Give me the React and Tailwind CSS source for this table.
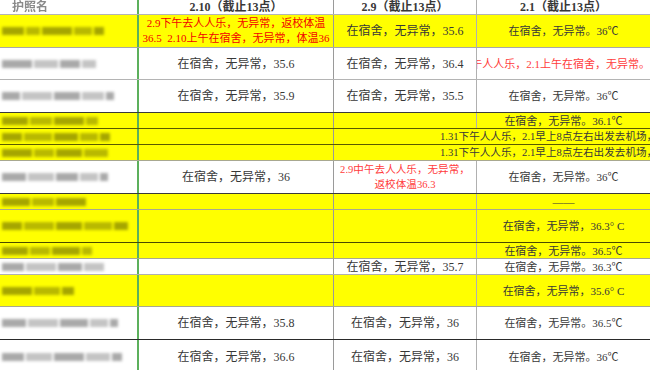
import React from 'react';

const FONT = "font-['Liberation_Serif','Noto_Sans_CJK_SC',serif]";

const ROWS = [
  { h: 'h-[33px]', yellow: true, line: 'border-[#a8a8a8]', name: [22, 14, 30, 18, 10], c2: 'red2', c3: '在宿舍，无异常，35.6', c4: '在宿舍，无异常。36℃' },
  { h: 'h-[32px]', yellow: false, line: 'border-[#b4b4b4]', name: [30, 24, 20, 14], c2: '在宿舍，无异常，35.6', c3: '在宿舍，无异常，36.4', c4: 'redClip' },
  { h: 'h-[33px]', yellow: false, line: 'border-[#3a3a3a]', name: [18, 30, 26, 22, 8], c2: '在宿舍，无异常，35.9', c3: '在宿舍，无异常，35.5', c4: '在宿舍，无异常。36℃' },
  { h: 'h-[16px]', yellow: true, line: 'border-[#5a5a00]', name: [26, 22, 30, 12], c2: '', c3: '', c4: '在宿舍，无异常。36.1℃' },
  { h: 'h-[16px]', yellow: true, line: 'border-[#5a5a00]', name: [20, 28, 24, 18, 10], c2: '', wide: '1.31下午人人乐，2.1早上8点左右出发去机场，' },
  { h: 'h-[16px]', yellow: true, line: 'border-[#a8a890]', name: [30, 20, 26, 24], c2: '', wide: '1.31下午人人乐，2.1早上8点左右出发去机场，' },
  { h: 'h-[33px]', yellow: false, line: 'border-[#3a3a3a]', name: [24, 26, 22, 18, 8], c2: '在宿舍，无异常，36', c3: 'red3', c4: '在宿舍，无异常。36℃' },
  { h: 'h-[16px]', yellow: true, line: 'border-[#a8a890]', name: [28, 22, 30], c2: '', c3: '', c4: '——' },
  { h: 'h-[33px]', yellow: true, line: 'border-[#4a4a00]', name: [20, 30, 26, 28, 14], c2: '', c3: '', c4: '在宿舍，无异常，36.3° C' },
  { h: 'h-[16px]', yellow: true, line: 'border-[#a8a890]', name: [26, 20, 28, 10], c2: '', c3: '', c4: '在宿舍，无异常。36.5℃' },
  { h: 'h-[16px]', yellow: false, line: 'border-[#b0b0b0]', name: [22, 30, 24, 20], c2: '', c3: '在宿舍，无异常，35.7', c4: '在宿舍，无异常。36.3℃' },
  { h: 'h-[32px]', yellow: true, line: 'border-[#a8a890]', name: [30, 26, 12], c2: '', c3: '', c4: '在宿舍，无异常，35.6° C' },
  { h: 'h-[33px]', yellow: false, line: 'border-[#2a2a2a]', name: [24, 30, 28, 18, 8], c2: '在宿舍，无异常，35.8', c3: '在宿舍，无异常，36', c4: '在宿舍，无异常。36.5℃' },
  { h: 'h-[34px]', yellow: false, line: 'border-[#b0b0b0]', name: [22, 26, 30, 24, 10], c2: '在宿舍，无异常，36.6', c3: '在宿舍，无异常，36', c4: '在宿舍，无异常。36℃' },
];

// redacted names: blurred blocks
const NameBlur = ({ parts, yellow }) => (
  <div className="flex items-center gap-[2px] pl-[2px] blur-[1.5px]">
    {parts.map((w, i) => (
      <span
        key={i}
        className={`h-[8px] ${yellow ? (i % 2 ? 'bg-[#b9b900]' : 'bg-[#a6a600]') : (i % 2 ? 'bg-[#c4c4c4]' : 'bg-[#a9a9a9]')}`}
        style={{ width: w }}
      />
    ))}
  </div>
);

const Cell = ({ content, small }) => {
  if (content === 'red2') {
    return (
      <div className="flex flex-col items-center text-[11px] leading-[15px] text-[#f20000]">
        <span>2.9下午去人人乐，无异常，返校体温</span>
        <span>36.5&nbsp;&nbsp;2.10上午在宿舍，无异常，体温36</span>
      </div>
    );
  }
  if (content === 'red3') {
    return (
      <div className="flex flex-col items-center text-[10.6px] leading-[15px] text-[#ff3c3c]">
        <span>2.9中午去人人乐，无异常，</span>
        <span>返校体温36.3</span>
      </div>
    );
  }
  if (content === 'redClip') {
    return (
      <div className="flex w-full justify-end overflow-hidden text-[11px] text-[#ff3c3c]">
        <span className="shrink-0">下午人人乐，2.1上午在宿舍，无异常。</span>
      </div>
    );
  }
  return <span className={small ? 'text-[11px]' : 'text-[12px]'}>{content}</span>;
};

export default function App() {
  return (
    <div className={`w-[650px] h-[370px] overflow-hidden bg-white text-[#383838] ${FONT}`}>
      {/* header */}
      <div className="flex h-[15px] border-b border-[#b4b4b4] text-[12px] font-bold leading-[14px]">
        <div className="flex w-[139px] items-center border-r-2 border-[#5cb05c] pl-[12px]">
          <span className="text-[#8a8a8a] blur-[0.6px]">护照名</span>
        </div>
        <div className="flex w-[195px] items-center justify-center border-r border-[#9a9a9a]">2.10（截止13点）</div>
        <div className="flex w-[143px] items-center justify-center border-r border-[#b0b0b0]">2.9（截止13点）</div>
        <div className="flex flex-1 items-center justify-center">2.1（截止13点）</div>
      </div>

      {ROWS.map((r, i) => (
        <div key={i} className={`flex ${r.h} border-b ${r.line} ${r.yellow ? 'bg-[#ffff00]' : 'bg-white'} leading-[14px] whitespace-nowrap`}>
          <div className="flex w-[139px] items-center overflow-hidden border-r-2 border-[#5cb05c]">
            <NameBlur parts={r.name} yellow={r.yellow} />
          </div>
          <div className="flex w-[195px] items-center justify-center overflow-hidden border-r border-[#9a9a9a]">
            <Cell content={r.c2} />
          </div>
          {r.wide ? (
            <div className="flex flex-1 items-center overflow-hidden pl-[106px] text-[10.6px]">
              <span className="shrink-0">{r.wide}</span>
            </div>
          ) : (
            <>
              <div className="flex w-[143px] items-center justify-center overflow-hidden border-r border-[#b0b0b0]">
                <Cell content={r.c3} />
              </div>
              <div className="flex flex-1 items-center justify-center overflow-hidden">
                <Cell content={r.c4} small />
              </div>
            </>
          )}
        </div>
      ))}
    </div>
  );
}
